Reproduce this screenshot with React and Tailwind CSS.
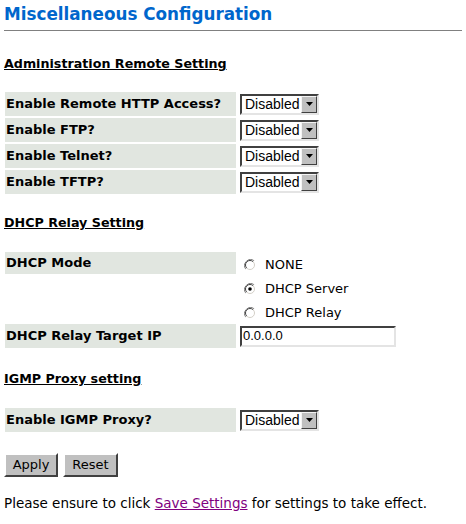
import { useState } from 'react'

const FONT = { fontFamily: '"DejaVu Sans", Verdana, sans-serif' }
const ARIAL = { fontFamily: '"Liberation Sans", Arial, sans-serif' }

function Radio({ checked }) {
  return (
    <svg width="12" height="12" viewBox="0 0 12 12" className="shrink-0">
      <path d="M10.2 1.8A6 6 0 0 0 1.8 10.2" fill="none" stroke="#808080" strokeWidth="1" />
      <path d="M1.8 10.2A6 6 0 0 0 10.2 1.8" fill="none" stroke="#ffffff" strokeWidth="1" />
      <circle cx="6" cy="6" r="4.5" fill="#ffffff" />
      <path d="M9.2 2.8A4.5 4.5 0 0 0 2.8 9.2" fill="none" stroke="#404040" strokeWidth="1" />
      <path d="M2.8 9.2A4.5 4.5 0 0 0 9.2 2.8" fill="none" stroke="#d4d0c8" strokeWidth="1" />
      {checked && <circle cx="6" cy="6" r="1.8" fill="#000000" />}
    </svg>
  )
}

function Select() {
  return (
    <div className="flex h-[21px] w-[79px] items-center border-2 border-t-[#404040] border-l-[#404040] border-r-[#e4e4e4] border-b-[#e4e4e4] bg-white">
      <span className="flex-1 pl-[3px] text-[14px] leading-none text-black" style={ARIAL}>
        Disabled
      </span>
      <div className="flex h-[17px] w-[16px] items-center justify-center border border-t-[#f4f4f4] border-l-[#f4f4f4] border-r-[#404040] border-b-[#404040] bg-[#c0c0c0]">
        <svg width="7" height="4" viewBox="0 0 7 4">
          <path d="M0 0h7L3.5 4z" fill="#000" />
        </svg>
      </div>
    </div>
  )
}

function Label({ children, h = 'h-[24px]' }) {
  return (
    <td className={`w-[231px] min-w-[231px] ${h} bg-[#e1e6e0] pl-[1px] pr-[2px] align-middle text-[13px] font-bold text-black`}>
      {children}
    </td>
  )
}

function Heading({ children }) {
  return <div className="text-[12.7px] font-bold leading-[16px] text-black underline">{children}</div>
}

function Button({ children, w }) {
  return (
    <button className={`flex h-[24px] ${w} items-center justify-center border-2 border-t-[#ffffff] border-l-[#ffffff] border-r-[#404040] border-b-[#404040] bg-[#c0c0c0] text-[13px] text-black`}>
      {children}
    </button>
  )
}

export default function App() {
  const [mode, setMode] = useState('server')

  const remote = ['Enable Remote HTTP Access?', 'Enable FTP?', 'Enable Telnet?', 'Enable TFTP?']
  const modes = [
    ['none', 'NONE'],
    ['server', 'DHCP Server'],
    ['relay', 'DHCP Relay'],
  ]

  return (
    <div className="min-h-screen w-full bg-white px-[4px] pt-[4px]" style={FONT}>
      <h1 className="text-[16.8px] font-bold leading-[20px] text-[#0066cc]">Miscellaneous Configuration</h1>
      <div className="mt-[6px] h-px w-full bg-[#808080]" />

      <div className="mt-[25px]">
        <Heading>Administration Remote Setting</Heading>
      </div>

      <table className="-ml-[1px] mt-[18px] border-separate border-spacing-[2px]">
        <tbody>
          {remote.map((r) => (
            <tr key={r}>
              <Label>{r}</Label>
              <td className="h-[24px] px-[2px] align-middle">
                <Select />
              </td>
            </tr>
          ))}
        </tbody>
      </table>

      <div className="mt-[19px]">
        <Heading>DHCP Relay Setting</Heading>
      </div>

      <table className="-ml-[1px] mt-[19px] border-separate border-spacing-[2px]">
        <tbody>
          {modes.map(([k, t], i) => (
            <tr key={k}>
              {i === 0 ? <Label h="h-[22px]">DHCP Mode</Label> : <td className="h-[22px] w-[231px] min-w-[231px]" />}
              <td className="h-[22px] px-[6px] pt-[3px] align-middle">
                <label className="flex items-center gap-[9px] text-[13px] leading-[16px] text-black" onClick={() => setMode(k)}>
                  <Radio checked={mode === k} />
                  <span>{t}</span>
                </label>
              </td>
            </tr>
          ))}
          <tr>
            <Label>DHCP Relay Target IP</Label>
            <td className="h-[24px] px-[2px] align-middle">
              <div className="flex h-[21px] w-[156px] items-center border-2 border-t-[#404040] border-l-[#404040] border-r-[#e4e4e4] border-b-[#e4e4e4] bg-white pl-[1px] text-[13px] text-black" style={ARIAL}>
                0.0.0.0
              </div>
            </td>
          </tr>
        </tbody>
      </table>

      <div className="mt-[21px]">
        <Heading>IGMP Proxy setting</Heading>
      </div>

      <table className="-ml-[1px] mt-[19px] border-separate border-spacing-[2px]">
        <tbody>
          <tr>
            <Label>Enable IGMP Proxy?</Label>
            <td className="h-[24px] px-[2px] align-middle">
              <Select />
            </td>
          </tr>
        </tbody>
      </table>

      <div className="mt-[19px] flex gap-[5px]">
        <Button w="w-[54px]">Apply</Button>
        <Button w="w-[55px]">Reset</Button>
      </div>

      <p className="mt-[18px] text-[13.5px] leading-[16px] text-black">
        Please ensure to click <a className="text-[#800080] underline" href="#">Save Settings</a> for settings to take effect.
      </p>
    </div>
  )
}
